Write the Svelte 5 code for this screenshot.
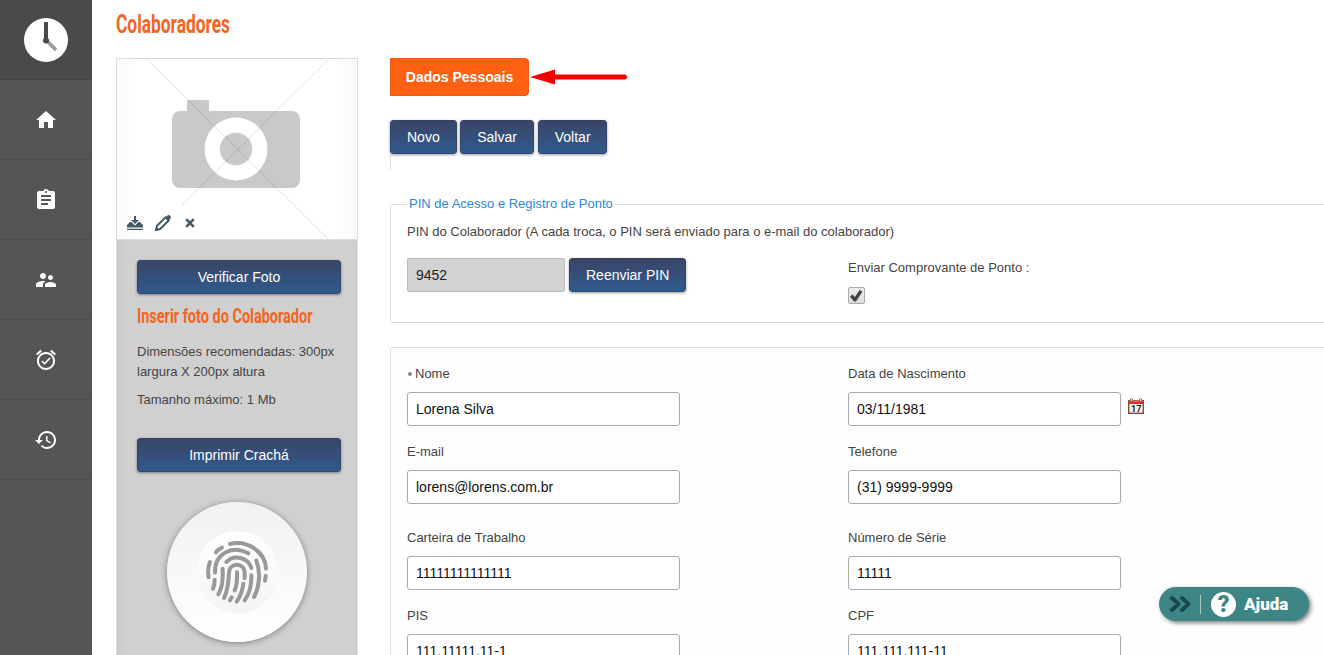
<script>
    let pin = '9452'
    let sendReceipt = true

    const menu = [
        {name: 'Início', path: 'M10 20v-6h4v6h5v-8h3L12 3 2 12h3v8z'},
        {name: 'Cadastros', path: 'M19 3h-4.18C14.4 1.84 13.3 1 12 1c-1.3 0-2.4.84-2.82 2H5c-1.1 0-2 .9-2 2v14c0 1.1.9 2 2 2h14c1.1 0 2-.9 2-2V5c0-1.100-.9-2-2-2zm-7 0c.55 0 1 .45 1 1s-.45 1-1 1-1-.45-1-1 .45-1 1-1zm2 14H7v-2h7v2zm3-4H7v-2h10v2zm0-4H7V7h10v2z'},
        {name: 'Colaboradores', path: 'M16.500 12c1.380 0 2.490-1.120 2.490-2.500S17.880 7 16.500 7C15.120 7 14 8.120 14 9.500s1.120 2.500 2.500 2.500zM9 11c1.660 0 2.990-1.340 2.990-3S10.660 5 9 5C7.340 5 6 6.340 6 8s1.340 3 3 3zm7.500 3c-1.830 0-5.500.92-5.500 2.750V19h11v-2.250c0-1.830-3.670-2.750-5.500-2.750zM9 13c-2.330 0-7 1.170-7 3.500V19h7v-2.250c0-.85.33-2.340 2.370-3.470C10.500 13.100 9.660 13 9 13z'},
        {name: 'Alarmes', path: 'M22 5.720l-4.600-3.860-1.290 1.530 4.600 3.860L22 5.720zM7.880 3.390L6.600 1.860 2 5.710l1.290 1.530 4.590-3.850zM12 4c-4.970 0-9 4.030-9 9s4.020 9 9 9c4.970 0 9-4.030 9-9s-4.030-9-9-9zm0 16c-3.870 0-7-3.130-7-7s3.130-7 7-7 7 3.130 7 7-3.130 7-7 7zm-1.460-5.470L8.410 12.400l-1.060 1.060 3.180 3.180 6-6-1.060-1.060-4.930 4.950z'},
        {name: 'Histórico', path: 'M13 3c-4.970 0-9 4.030-9 9H1l3.890 3.890.07.14L9 12H6c0-3.870 3.130-7 7-7s7 3.130 7 7-3.130 7-7 7c-1.930 0-3.680-.79-4.940-2.060l-1.420 1.420C8.270 19.990 10.510 21 13 21c4.970 0 9-4.030 9-9s-4.030-9-9-9zm-1 5v5l4.280 2.540.72-1.210-3.500-2.080V8H12z'}
    ]

    const ridges = [
        'M240 176C290 163 346 198 348 250',
        'M198 201Q205 192 216 187',
        'M195 262C194 206 243 177 295 204',
        'M229 230C252 206 294 216 304 248',
        'M180 230Q171 252 176 276',
        'M194 283Q194 297 189 310',
        'M218 250C219 290 216 308 205 327',
        'M222 338C236 308 235 290 237 262C238 230 283 230 284 262L284 279',
        'M261 261C262 290 259 304 254 315',
        'M280 295C277 318 268 338 260 349',
        'M245 336L240 345',
        'M304 270C305 303 296 328 284 345',
        'M319 226C333 260 328 305 312 335',
        'M347 271L345 286'
    ]

    const actions = ['Novo', 'Salvar', 'Voltar']

    let rows = [
        [{label: 'Nome', value: 'Lorena Silva', required: true}, {label: 'Data de Nascimento', value: '03/11/1981', date: true}],
        [{label: 'E-mail', value: 'lorens@lorens.com.br'}, {label: 'Telefone', value: '(31) 9999-9999'}],
        [{label: 'Carteira de Trabalho', value: '11111111111111', spaced: true}, {label: 'Número de Série', value: '11111'}],
        [{label: 'PIS', value: '111.11111.11-1'}, {label: 'CPF', value: '111.111.111-11'}]
    ]
</script>


<div class="page">
    <nav class="sidebar">
        <div class="logo">
            <svg width="44" height="44" viewBox="0 0 44 44">
                <circle cx="22" cy="22" r="22" fill="#fff"/>
                <path d="M22 22L32 32" stroke="#999" stroke-width="3.500"/>
                <path d="M22 4V23" stroke="#4a4a4a" stroke-width="4"/>
                <circle cx="22" cy="22.500" r="3" fill="#4a4a4a"/>
            </svg>
        </div>
        {#each menu as item}
            <a class="menu-item" href="#menu" aria-label={item.name}>
                <svg width="24" height="24" viewBox="0 0 24 24" fill="#fff"><path d={item.path}/></svg>
            </a>
        {/each}
    </nav>

    <aside class="profile">
        <h1>
            <svg width="220" height="34"><text x="0" y="23" textLength="114" lengthAdjust="spacingAndGlyphs">Colaboradores</text></svg>
        </h1>
        <div class="profile-card">
            <div class="photo">
                <svg class="placeholder" width="240" height="180" viewBox="0 0 240 180">
                    <path fill="#c9c9c9" d="M70 41H92V52H175a8 8 0 0 1 8 8V121a8 8 0 0 1-8 8H63a8 8 0 0 1-8-8V60a8 8 0 0 1 8-8H70z"/>
                    <circle cx="119" cy="90" r="31.500" fill="#fff"/>
                    <circle cx="119" cy="90" r="16.200" fill="#c9c9c9"/>
                    <path d="M31 1L211 180M211 1L65 146" fill="none" stroke="#000" stroke-opacity=".12"/>
                </svg>
                <div class="photo-tools">
                    <svg width="16" height="14" viewBox="0 0 16 14" fill="#455a64">
                        <path d="M0 12.700H16V14H0zM0 11.500V9L3 6H4.500L8 9.500L11.500 6H13L16 9V11.500zM7 0H9V4H12L8 8L4 4H7z"/>
                    </svg>
                    <svg width="16" height="16" viewBox="0 0 16 16">
                        <path d="M1 15L2 10.800L10.500 2.300L13.700 5.500L5.200 14Z" fill="none" stroke="#455a64" stroke-width="2"/>
                        <path d="M11 2L13 0Q16 0 16 3L14 5zM0 16L1 11.500L4.500 15z" fill="#455a64"/>
                    </svg>
                    <svg width="10" height="10" viewBox="0 0 10 10">
                        <path d="M1.200 1.200L8.800 8.800M8.800 1.200L1.200 8.800" stroke="#455a64" stroke-width="2.600"/>
                    </svg>
                </div>
            </div>
            <div class="profile-body">
                <button class="btn wide">Verificar Foto</button>
                <h2>
                    <svg width="203" height="34"><text x="0" y="19" textLength="175.500" lengthAdjust="spacingAndGlyphs">Inserir foto do Colaborador</text></svg>
                </h2>
                <p>Dimensões recomendadas: 300px<br>largura X 200px altura</p>
                <p>Tamanho máximo: 1 Mb</p>
                <button class="btn wide print">Imprimir Crachá</button>
                <div class="finger">
                    <svg width="140" height="140" viewBox="51 50 420 420">
                        <defs>
                            <linearGradient id="pad" x1="0" y1="0" x2="0" y2="1">
                                <stop offset="0" stop-color="#fff"/>
                                <stop offset="1" stop-color="#f4f4f4"/>
                            </linearGradient>
                        </defs>
                        <circle cx="262" cy="261" r="123" fill="url(#pad)"/>
                        <g fill="none" stroke="#999" stroke-width="12" stroke-linecap="round">
                            {#each ridges as d}
                                <path {d}/>
                            {/each}
                        </g>
                    </svg>
                </div>
            </div>
        </div>
    </aside>

    <main>
        <div class="tabs">
            <button class="tab">Dados Pessoais</button>
            <svg width="98" height="16" viewBox="0 0 98 16">
                <path d="M22 8H94.500" stroke="#f00000" stroke-width="5" stroke-linecap="round"/>
                <path d="M0 8L25 .500V15.500z" fill="#f00000"/>
            </svg>
        </div>
        <div class="actions">
            {#each actions as action}
                <button class="btn">{action}</button>
            {/each}
        </div>

        <fieldset class="pin">
            <legend>PIN de Acesso e Registro de Ponto</legend>
            <div class="pin-text">PIN do Colaborador (A cada troca, o PIN será enviado para o e-mail do colaborador)</div>
            <div class="pin-row">
                <div class="pin-col">
                    <input class="pin-input" value={pin} readonly>
                    <button class="btn">Reenviar PIN</button>
                </div>
                <label class="receipt">
                    <span>Enviar Comprovante de Ponto :</span>
                    <input type="checkbox" bind:checked={sendReceipt}>
                    <span class="check">
                        {#if sendReceipt}
                            <svg width="13" height="12" viewBox="0 0 13 12"><path d="M0 6.500L2.500 4.500L5 7L9.500 0L12.500 1.500L6 11.500H4z" fill="#444"/></svg>
                        {/if}
                    </span>
                </label>
            </div>
        </fieldset>

        <section class="data">
            {#each rows as row}
                <div class="row" class:spaced={row[0].spaced}>
                    {#each row as field}
                        <label class="field">
                            <span class="field-name">{#if field.required}<i></i>{/if}{field.label}</span>
                            <span class="field-box">
                                <input bind:value={field.value}>
                                {#if field.date}
                                    <svg width="16" height="16" viewBox="0 0 16 16">
                                        <rect x=".7" y="2.700" width="14.600" height="12.600" fill="#fff5ee" stroke="#7b4a42" stroke-width="1.400"/>
                                        <rect x="1" y="2" width="14" height="4" fill="#d9302c"/>
                                        <path d="M1 3H15" stroke="#f08078"/>
                                        <circle cx="3.500" cy="2" r="1.300" fill="#eee" stroke="#7b4a42" stroke-width=".8"/>
                                        <circle cx="12.500" cy="2" r="1.300" fill="#eee" stroke="#7b4a42" stroke-width=".8"/>
                                        <text class="day" x="8.200" y="13.500" text-anchor="middle">17</text>
                                    </svg>
                                {/if}
                            </span>
                        </label>
                    {/each}
                </div>
            {/each}
        </section>
    </main>

    <button class="help">
        <svg width="21" height="16" viewBox="0 0 21 16"><path d="M2 2L8.500 8L2 14M12 2L18.500 8L12 14" fill="none" stroke="#17494a" stroke-width="4" stroke-linecap="round" stroke-linejoin="round"/></svg>
        <span class="divider"></span>
        <span class="question">?</span>
        <span>Ajuda</span>
    </button>
</div>


<style>
    :global(body) {
        background: #fff;
        overflow: hidden;
    }

    .page {
        display: flex;
        height: 655px;
        overflow: hidden;
        font: 13px/20px "Liberation Sans", Arial, sans-serif;
        color: #444;
    }

    .page * {
        box-sizing: border-box;
    }

    svg {
        display: block;
        flex: none;
        overflow: visible;
    }

    button, input {
        font-family: inherit;
    }

    .sidebar {
        width: 92px;
        flex: none;
        background: #555;
    }

    .logo, .menu-item {
        height: 80px;
        display: flex;
        align-items: center;
        justify-content: center;
        border-bottom: 1px solid #4d4d4d;
    }

    .logo {
        background: #4a4a4a;
        border-color: #434343;
    }

    .profile {
        width: 242px;
        flex: none;
        margin-left: 24px;
    }

    h1 {
        height: 58px;
        margin: 0;
        padding-top: 10px;
    }

    h1 text, h2 text {
        font-family: Roboto, sans-serif;
        font-weight: 700;
        font-size: 25px;
        fill: #f26522;
    }

    h2 text {
        font-size: 21px;
    }

    .profile-card {
        height: 700px;
        border: 1px solid #ddd;
        background: #d0d0d0;
    }

    .photo {
        height: 180px;
        position: relative;
        background: linear-gradient(90deg, #fafafa, #fff 20px, #fff 220px, #fafafa);
    }

    .photo-tools {
        position: absolute;
        left: 10px;
        top: 156px;
        display: flex;
        align-items: center;
        gap: 12px;
    }

    .photo-tools svg:last-child {
        margin-left: 2px;
    }

    .profile-body {
        border-top: 1px solid #ddd;
        padding: 20px 16px 0 20px;
        box-shadow: inset 10px 0 10px -10px rgba(0, 0, 0, 0.05), inset -10px 0 10px -10px rgba(0, 0, 0, 0.05);
        height: 519px;
    }

    .btn {
        height: 34px;
        padding: 0 16px;
        border: 1px solid #35456a;
        border-radius: 3px;
        background: linear-gradient(#3a4567, #2f5a8d);
        box-shadow: 0 1px 3px rgba(0, 0, 0, 0.4);
        color: #fff;
        font-size: 14px;
        white-space: nowrap;
    }

    .wide {
        display: block;
        width: 204px;
    }

    h2 {
        height: 38px;
        margin: 0;
        padding-top: 10px;
    }

    p {
        margin: 10px 0 0;
        width: 204px;
        white-space: nowrap;
    }

    p + p {
        margin-top: 8px;
    }

    .print {
        margin-top: 28px;
    }

    .finger {
        width: 140px;
        height: 140px;
        margin: 30px auto 0 30px;
        border-radius: 50%;
        background: linear-gradient(#f1f1f1, #fff);
        box-shadow: 0 1px 6px rgba(0, 0, 0, 0.4);
    }

    main {
        flex: 1;
        min-width: 0;
        margin-left: 32px;
        padding-top: 58px;
    }

    .tabs {
        display: flex;
        align-items: center;
        gap: 1px;
    }

    .tab {
        width: 139px;
        height: 38px;
        padding: 0;
        border: 1px solid #f05a14;
        border-radius: 0 4px 4px 0;
        background: #ff6012;
        color: #fff;
        font-size: 14px;
        font-weight: bold;
    }

    .actions {
        display: flex;
        gap: 3.500px;
        height: 50px;
        margin-top: 24px;
        background: linear-gradient(#ddd, #ddd) 0 100% / 1px 16px no-repeat;
    }

    .actions .btn:last-child {
        width: 69px;
        margin-left: 0.4px;
    }

    .pin {
        height: 129px;
        min-width: 0;
        width: 960px;
        margin: 24px 0 0;
        padding: 8px 16px 0;
        border: 1px solid #ddd;
        border-radius: 2px;
    }

    legend {
        padding: 0 2px;
        color: #2e86dc;
    }

    .pin-row {
        display: flex;
    }

    .pin-col {
        display: flex;
        gap: 4px;
        width: 441px;
        padding-top: 16px;
    }

    .pin-input {
        width: 158px;
        height: 34px;
        padding: 0 8px;
        border: 1px solid #bbb;
        border-radius: 2px;
        background: #d3d3d3;
        color: #222;
        font-size: 14px;
    }

    .receipt {
        display: flex;
        flex-direction: column;
        padding-top: 16px;
    }

    .receipt input {
        display: none;
    }

    .check {
        width: 17px;
        height: 17px;
        margin-top: 9px;
        padding: 2px 0 0 1px;
        border: 1px solid #aaa;
        border-radius: 2px;
        background: linear-gradient(#eee, #ddd);
    }

    .data {
        width: 960px;
        height: 400px;
        margin-top: 24px;
        padding: 16px;
        border: 1px solid #ddd;
        border-radius: 2px;
        background: #fefefe;
    }

    .row {
        display: flex;
        gap: 168px;
        margin-bottom: 16px;
    }

    .spaced {
        margin-top: 24px;
    }

    .field {
        width: 273px;
    }

    .field-name {
        display: block;
        margin-bottom: 8px;
    }

    .field-name i {
        display: inline-block;
        width: 4px;
        height: 4px;
        margin: 0 3px 2px 1px;
        border-radius: 50%;
        background: #888;
    }

    .field-box {
        display: flex;
        gap: 7px;
    }

    .field-box svg {
        margin-top: 6px;
    }

    .field input {
        flex: none;
        width: 273px;
        height: 34px;
        padding: 0 8px;
        border: 1px solid #aaa;
        border-radius: 3px;
        background: #fff;
        color: #111;
        font-size: 14px;
    }

    .day {
        font: bold 9px Roboto, sans-serif;
        fill: #222;
    }

    .help {
        position: absolute;
        left: 1159px;
        top: 587px;
        display: flex;
        align-items: center;
        width: 150px;
        height: 34px;
        padding: 0 0 0 11px;
        border: 0;
        border-radius: 17px;
        background: #3e8686;
        box-shadow: 2px 2px 4px rgba(0, 0, 0, 0.5);
        color: #fff;
        font: 900 17px Roboto, sans-serif;
    }

    .divider {
        width: 1px;
        height: 19px;
        margin: 0 10px 0 9px;
        background: #a3c9c9;
    }

    .question {
        width: 25px;
        height: 25px;
        margin-right: 8px;
        border-radius: 50%;
        background: #fff;
        color: #3e8686;
        font-size: 23px;
        font-weight: 900;
        line-height: 26px;
        text-align: center;
    }
</style>
